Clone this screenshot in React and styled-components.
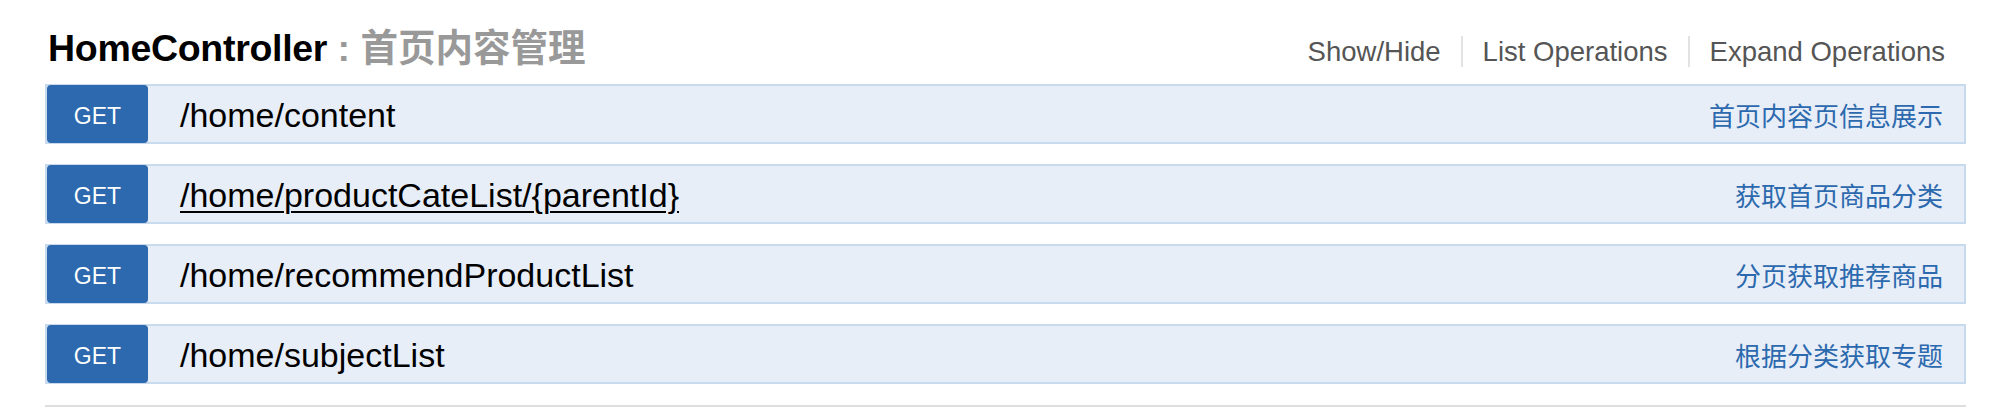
import React from "react";
import styled, { createGlobalStyle } from "styled-components";

const Global = createGlobalStyle`
  html, body { margin: 0; padding: 0; background: #ffffff; }
  body { font-family: "Liberation Sans", "Noto Sans CJK SC", sans-serif; }
`;

const Section = styled.section`
  width: 1921px;
  margin-left: 45px;
  border-bottom: 2px solid #dedede;
  padding-bottom: 21px;
`;

const Header = styled.header`
  display: flex;
  align-items: baseline;
  justify-content: space-between;
  height: 84px;
  box-sizing: border-box;
  padding: 29px 21px 0 3px;
`;

const Title = styled.h2`
  margin: 0;
  font-size: 37.5px;
  line-height: 38px;
  font-weight: 700;
  color: #000;
  letter-spacing: -0.3px;
`;

const TitleNote = styled.span`
  color: #999999;
  letter-spacing: 0;
`;

const Options = styled.ul`
  display: flex;
  align-items: center;
  list-style: none;
  margin: 0;
  padding: 0;
`;

const Option = styled.li`
  font-size: 27.5px;
  line-height: 31px;
  color: #555555;
  padding: 0 20px;
  border-left: 2px solid #e2e2e2;
  &:first-child { border-left: none; padding-left: 0; }
  &:last-child { padding-right: 0; }
`;

const List = styled.ul`
  list-style: none;
  margin: 0;
  padding: 0;
  display: flex;
  flex-direction: column;
  gap: 20px;
`;

const Row = styled.li`
  display: flex;
  align-items: stretch;
  height: 60px;
  box-sizing: border-box;
  border: 2px solid #c8daee;
  background: #e7eef8;
`;

const Method = styled.span`
  flex: 0 0 101px;
  display: flex;
  align-items: center;
  justify-content: center;
  box-sizing: border-box;
  padding-top: 5px;
  background: #2c69ae;
  color: #ffffff;
  border-radius: 4px;
  font-size: 23px;
  margin: -1px 0 -1px 0;
`;

const Path = styled.span`
  flex: 1;
  display: flex;
  align-items: center;
  padding-left: 32px;
  padding-top: 2px;
  font-size: 34px;
  color: #000000;
  text-decoration: ${(p) => (p.$hover ? "underline" : "none")};
  text-decoration-thickness: 2px;
  text-underline-offset: 4px;
`;

const PathText = styled.span`
  text-decoration: inherit;
`;

const Desc = styled.span`
  display: flex;
  align-items: center;
  padding-right: 21px;
  font-size: 26px;
  color: #2c69ae;
`;

const ops = [
  { path: "/home/content", desc: "首页内容页信息展示" },
  { path: "/home/productCateList/{parentId}", desc: "获取首页商品分类", hover: true },
  { path: "/home/recommendProductList", desc: "分页获取推荐商品" },
  { path: "/home/subjectList", desc: "根据分类获取专题" },
];

export default function App() {
  return (
    <>
      <Global />
      <Section>
        <Header>
          <Title>
            HomeController<TitleNote> : 首页内容管理</TitleNote>
          </Title>
          <Options>
            <Option>Show/Hide</Option>
            <Option>List Operations</Option>
            <Option>Expand Operations</Option>
          </Options>
        </Header>
        <List>
          {ops.map((op) => (
            <Row key={op.path}>
              <Method>GET</Method>
              <Path $hover={op.hover}>
                <PathText>{op.path}</PathText>
              </Path>
              <Desc>{op.desc}</Desc>
            </Row>
          ))}
        </List>
      </Section>
    </>
  );
}
